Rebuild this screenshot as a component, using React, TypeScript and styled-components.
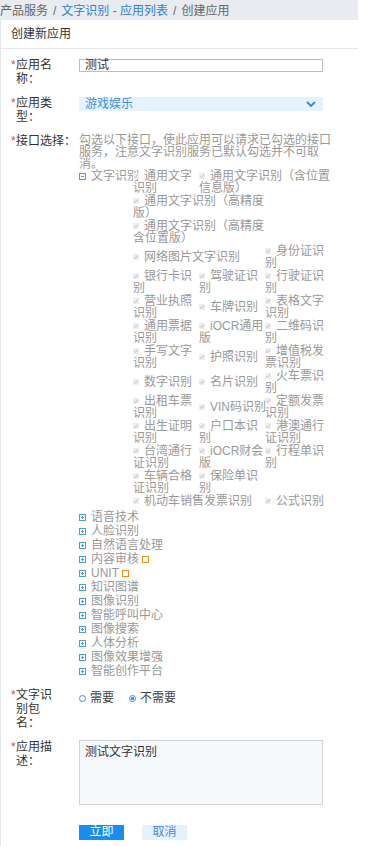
import React from "react";
import styled, { createGlobalStyle } from "styled-components";

const GlobalStyle = createGlobalStyle`
  html, body {
    margin: 0;
    padding: 0;
    background: #fff;
  }
  body {
    font-family: "Liberation Sans", "Noto Sans CJK SC", sans-serif;
    font-size: 12px;
    color: #333;
  }
`;

const Page = styled.div`
  width: 358px;
`;

const Crumbs = styled.div`
  height: 20px;
  line-height: 22px;
  background: #e8ebf0;
  color: #666;
  white-space: nowrap;
  overflow: hidden;
`;

const CrumbLink = styled.span`
  color: #2f7fd8;
`;

const CrumbSep = styled.span`
  padding: 0 5px;
`;

const Panel = styled.div`
  border-left: 1px solid #e3e6ea;
  min-height: 826px;
  box-sizing: border-box;
`;

const PanelTitle = styled.div`
  height: 28px;
  line-height: 28px;
  padding-left: 10px;
  border-bottom: 1px solid #e4e8ed;
  color: #333;
`;

const Form = styled.div`
  display: flex;
  flex-direction: column;
  gap: 10px;
  padding: 9px 0 6px 10px;
`;

const Row = styled.div`
  display: grid;
  grid-template-columns: 68px 256px;
  align-items: start;
`;

const Label = styled.div`
  display: flex;
  line-height: 14px;
  color: #333;
`;

const Star = styled.span`
  flex: none;
  width: 5px;
  color: #e5484d;
`;

const LabelText = styled.span<{ $nowrap?: boolean }>`
  width: ${(p) => (p.$nowrap ? "auto" : "40px")};
  white-space: ${(p) => (p.$nowrap ? "nowrap" : "normal")};
`;

const TextBox = styled.div`
  margin-top: 1px;
  width: 244px;
  height: 13px;
  box-sizing: border-box;
  border: 1px solid #bdbdbd;
  padding-left: 5px;
  line-height: 11px;
  color: #333;
`;

const Select = styled.div`
  margin-top: 1px;
  width: 244px;
  height: 14px;
  box-sizing: border-box;
  padding: 0 7px 0 6px;
  display: flex;
  align-items: center;
  justify-content: space-between;
  background: #e6f3fd;
  color: #3d8fe6;
  line-height: 14px;
`;

const Hint = styled.div`
  color: #999;
  line-height: 12px;
`;

const Tree = styled.div`
  color: #999;
`;

const OpenNode = styled.div`
  display: flex;
  align-items: flex-start;
`;

const NodeHead = styled.div`
  flex: none;
  width: 54px;
  display: flex;
  align-items: center;
  gap: 5px;
  white-space: nowrap;
  line-height: 12px;
`;

const Leaves = styled.div`
  display: grid;
  grid-template-columns: repeat(3, 66px);
  row-gap: 1px;
  align-items: center;
  line-height: 12px;
`;

const Leaf = styled.div<{ $span?: number }>`
  grid-column: span ${(p) => p.$span ?? 1};
  margin-right: -2px;
`;

const CheckMark = styled.svg`
  width: 6px;
  height: 6px;
  margin-right: 5px;
  vertical-align: middle;
  position: relative;
  top: -1px;
`;

const ClosedList = styled.div`
  margin-top: 3px;
`;

const Node = styled.div`
  display: flex;
  align-items: center;
  gap: 5px;
  line-height: 14px;
`;

const Badge = styled.span`
  display: inline-block;
  width: 7px;
  height: 7px;
  box-sizing: border-box;
  border: 1.5px solid #f08a1e;
  margin-left: -2px;
`;

const RadioGroup = styled.div`
  display: flex;
  align-items: center;
  padding-top: 3px;
  line-height: 14px;
  color: #444;
`;

const RadioOption = styled.label`
  display: flex;
  align-items: center;
  gap: 4px;
  margin-right: 15px;
`;

const TextArea = styled.div`
  width: 244px;
  height: 65px;
  box-sizing: border-box;
  border: 1px solid #cfd3d6;
  background: #f5f9fc;
  padding: 4px 5px;
  line-height: 14px;
  color: #333;
`;

const Actions = styled.div`
  display: flex;
  gap: 18px;
  padding-left: 68px;
  margin-top: 10px;
`;

const Button = styled.button<{ $primary?: boolean }>`
  width: 45px;
  height: 15px;
  border: 0;
  padding: 0;
  font: inherit;
  font-size: 12px;
  line-height: 15px;
  background: ${(p) => (p.$primary ? "#1a8cf0" : "#e5f2fc")};
  color: ${(p) => (p.$primary ? "#fff" : "#3f8ae0")};
`;

function Check() {
  return (
    <CheckMark viewBox="0 0 6 6">
      <rect x="0" y="0" width="6" height="6" fill="#eeeeee" />
      <path d="M1.2 3.1l1.3 1.3 2.4-2.8" stroke="#b8b8b8" strokeWidth="0.9" fill="none" />
    </CheckMark>
  );
}

function Toggle({ open }: { open?: boolean }) {
  return (
    <svg width="7" height="7" viewBox="0 0 7 7" style={{ flex: "none" }}>
      <rect x="0.5" y="0.5" width="6" height="6" fill="none" stroke="#4a9be8" strokeWidth="1" />
      <path d="M2 3.5h3" stroke="#4a9be8" strokeWidth="1" />
      {!open && <path d="M3.5 2v3" stroke="#4a9be8" strokeWidth="1" />}
    </svg>
  );
}

function Radio({ checked }: { checked?: boolean }) {
  return (
    <svg width="7" height="7" viewBox="0 0 7 7">
      <circle cx="3.5" cy="3.5" r="3" fill="#fff" stroke="#3d8ee8" strokeWidth="1" />
      {checked && <circle cx="3.5" cy="3.5" r="1.7" fill="#3d8ee8" />}
    </svg>
  );
}

const leaves: { name: string; span?: number }[] = [
  { name: "通用文字识别" },
  { name: "通用文字识别（含位置信息版）", span: 2 },
  { name: "通用文字识别（高精度版）", span: 2 },
  { name: "通用文字识别（高精度含位置版）", span: 2 },
  { name: "网络图片文字识别", span: 2 },
  { name: "身份证识别" },
  { name: "银行卡识别" },
  { name: "驾驶证识别" },
  { name: "行驶证识别" },
  { name: "营业执照识别" },
  { name: "车牌识别" },
  { name: "表格文字识别" },
  { name: "通用票据识别" },
  { name: "iOCR通用版" },
  { name: "二维码识别" },
  { name: "手写文字识别" },
  { name: "护照识别" },
  { name: "增值税发票识别" },
  { name: "数字识别" },
  { name: "名片识别" },
  { name: "火车票识别" },
  { name: "出租车票识别" },
  { name: "VIN码识别" },
  { name: "定额发票识别" },
  { name: "出生证明识别" },
  { name: "户口本识别" },
  { name: "港澳通行证识别" },
  { name: "台湾通行证识别" },
  { name: "iOCR财会版" },
  { name: "行程单识别" },
  { name: "车辆合格证识别" },
  { name: "保险单识别" },
  { name: "机动车销售发票识别", span: 2 },
  { name: "公式识别" },
];

const nodes: { name: string; badge?: boolean }[] = [
  { name: "语音技术" },
  { name: "人脸识别" },
  { name: "自然语言处理" },
  { name: "内容审核", badge: true },
  { name: "UNIT", badge: true },
  { name: "知识图谱" },
  { name: "图像识别" },
  { name: "智能呼叫中心" },
  { name: "图像搜索" },
  { name: "人体分析" },
  { name: "图像效果增强" },
  { name: "智能创作平台" },
];

export default function App() {
  return (
    <Page>
      <GlobalStyle />
      <Crumbs>
        产品服务<CrumbSep>/</CrumbSep>
        <CrumbLink>文字识别 - 应用列表</CrumbLink>
        <CrumbSep>/</CrumbSep>创建应用
      </Crumbs>
      <Panel>
        <PanelTitle>创建新应用</PanelTitle>
        <Form>
          <Row>
            <Label>
              <Star>*</Star>
              <LabelText>应用名称：</LabelText>
            </Label>
            <TextBox>测试</TextBox>
          </Row>
          <Row>
            <Label>
              <Star>*</Star>
              <LabelText>应用类型：</LabelText>
            </Label>
            <Select>
              <span>游戏娱乐</span>
              <svg width="10" height="6" viewBox="0 0 10 6">
                <path d="M1 1l4 4 4-4" stroke="#2e86e0" strokeWidth="1.8" fill="none" />
              </svg>
            </Select>
          </Row>
          <Row>
            <Label>
              <Star>*</Star>
              <LabelText $nowrap>接口选择：</LabelText>
            </Label>
            <div>
              <Hint>
                勾选以下接口，使此应用可以请求已勾选的接口服务，注意文字识别服务已默认勾选并不可取消。
              </Hint>
              <Tree>
                <OpenNode>
                  <NodeHead>
                    <Toggle open />
                    <span>文字识别</span>
                  </NodeHead>
                  <Leaves>
                    {leaves.map((l) => (
                      <Leaf key={l.name} $span={l.span}>
                        <Check />
                        {l.name}
                      </Leaf>
                    ))}
                  </Leaves>
                </OpenNode>
                <ClosedList>
                  {nodes.map((n) => (
                    <Node key={n.name}>
                      <Toggle />
                      <span>{n.name}</span>
                      {n.badge && <Badge />}
                    </Node>
                  ))}
                </ClosedList>
              </Tree>
            </div>
          </Row>
          <Row>
            <Label>
              <Star>*</Star>
              <LabelText>文字识别包名：</LabelText>
            </Label>
            <RadioGroup>
              <RadioOption>
                <Radio />
                需要
              </RadioOption>
              <RadioOption>
                <Radio checked />
                不需要
              </RadioOption>
            </RadioGroup>
          </Row>
          <Row>
            <Label>
              <Star>*</Star>
              <LabelText>应用描述：</LabelText>
            </Label>
            <TextArea>测试文字识别</TextArea>
          </Row>
          <Actions>
            <Button $primary>立即</Button>
            <Button>取消</Button>
          </Actions>
        </Form>
      </Panel>
    </Page>
  );
}
